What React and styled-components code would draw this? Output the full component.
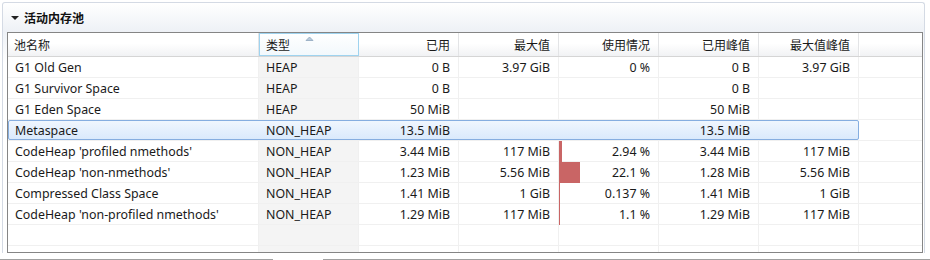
import React from "react";
import styled, { createGlobalStyle } from "styled-components";

const GlobalStyle = createGlobalStyle`
  html, body { margin: 0; padding: 0; background: #fff; }
  body {
    font-family: "Noto Sans", "Noto Sans CJK SC", sans-serif;
    font-size: 12px;
    color: #1a1a1a;
  }
`;

const columns = [
  { key: "name", title: "池名称", align: "left" },
  { key: "type", title: "类型", align: "left", sorted: true },
  { key: "used", title: "已用", align: "right" },
  { key: "max", title: "最大值", align: "right" },
  { key: "usage", title: "使用情况", align: "right" },
  { key: "peakUsed", title: "已用峰值", align: "right" },
  { key: "peakMax", title: "最大值峰值", align: "right" },
];

const pools = [
  { name: "G1 Old Gen", type: "HEAP", used: "0 B", max: "3.97 GiB", usage: "0 %", pct: 0, peakUsed: "0 B", peakMax: "3.97 GiB" },
  { name: "G1 Survivor Space", type: "HEAP", used: "0 B", max: "", usage: "", pct: 0, peakUsed: "0 B", peakMax: "" },
  { name: "G1 Eden Space", type: "HEAP", used: "50 MiB", max: "", usage: "", pct: 0, peakUsed: "50 MiB", peakMax: "" },
  { name: "Metaspace", type: "NON_HEAP", used: "13.5 MiB", max: "", usage: "", pct: 0, peakUsed: "13.5 MiB", peakMax: "", selected: true },
  { name: "CodeHeap 'profiled nmethods'", type: "NON_HEAP", used: "3.44 MiB", max: "117 MiB", usage: "2.94 %", pct: 2.94, peakUsed: "3.44 MiB", peakMax: "117 MiB" },
  { name: "CodeHeap 'non-nmethods'", type: "NON_HEAP", used: "1.23 MiB", max: "5.56 MiB", usage: "22.1 %", pct: 22.1, peakUsed: "1.28 MiB", peakMax: "5.56 MiB" },
  { name: "Compressed Class Space", type: "NON_HEAP", used: "1.41 MiB", max: "1 GiB", usage: "0.137 %", pct: 0.137, peakUsed: "1.41 MiB", peakMax: "1 GiB" },
  { name: "CodeHeap 'non-profiled nmethods'", type: "NON_HEAP", used: "1.29 MiB", max: "117 MiB", usage: "1.1 %", pct: 1.1, peakUsed: "1.29 MiB", peakMax: "117 MiB" },
  {},
  {},
];

const App = () => {
  return (
    <>
      <GlobalStyle />
      <Section>
        <SectionTitle>
          <Caret />
          活动内存池
        </SectionTitle>
        <Table>
          <HeaderRow>
            <Cols>
              {columns.map((c) => (
                <HeadCell key={c.key} $align={c.align} $sorted={c.sorted}>
                  {c.title}
                  {c.sorted && (
                    <SortArrow width="9" height="5" viewBox="0 0 9 5">
                      <path d="M1 4.5 L4.5 1 L8 4.5 Z" fill="#b9cbdc" stroke="#8ea6be" strokeWidth="0.8" />
                    </SortArrow>
                  )}
                </HeadCell>
              ))}
            </Cols>
            <HeadFiller />
          </HeaderRow>
          {pools.map((p, i) => (
            <Row key={i}>
              <Cols $selected={p.selected}>
                {columns.map((c) => (
                  <Cell key={c.key} $align={c.align} $sorted={c.sorted} $selected={p.selected}>
                    {c.key === "usage" && p.pct > 0 && (
                      <UsageBar style={{ width: `${Math.max(1, Math.round(p.pct * 0.97))}px` }} />
                    )}
                    <CellText>{p[c.key]}</CellText>
                  </Cell>
                ))}
              </Cols>
              <Filler />
            </Row>
          ))}
        </Table>
      </Section>
      <Footer>
        <FooterLine $w="273px" />
        <FooterLine $grow />
      </Footer>
    </>
  );
};

export default App;

const Section = styled.div`
  margin: 2px 5px 0 2px;
  border: 1px solid #d4dae4;
  border-bottom: none;
  border-radius: 3px 3px 0 0;
  background: linear-gradient(#ffffff 0px, #eef1f6 28px, #f4f6f9 40px, #ffffff 60px);
  padding: 0 0 0 4px;
  height: 251px;
  box-sizing: border-box;
`;

const SectionTitle = styled.div`
  display: flex;
  align-items: center;
  height: 29px;
  padding-left: 4px;
  font-weight: bold;
  font-size: 12px;
  color: #111;
  gap: 5px;
`;

const Caret = styled.span`
  width: 0;
  height: 0;
  border-left: 4px solid transparent;
  border-right: 4px solid transparent;
  border-top: 4px solid #222;
`;

const Table = styled.div`
  width: 916px;
  height: 221px;
  border: 1px solid #858585;
  box-sizing: border-box;
  background: #fff;
  overflow: hidden;
`;

const Cols = styled.div`
  display: grid;
  grid-template-columns: 251px repeat(6, 100px);
  width: 851px;
  box-sizing: border-box;
  ${(p) =>
    p.$selected &&
    `
    outline: 1px solid #86aee0;
    outline-offset: -1px;
    border-radius: 2px;
    background: linear-gradient(#f1f7fe, #d9e9fc);
  `}
`;

const HeaderRow = styled.div`
  display: flex;
  height: 23px;
  border-bottom: 1px solid #d5d5d5;
  background: linear-gradient(#ffffff 0%, #ffffff 45%, #f1f2f4 100%);
`;

const HeadCell = styled.div`
  position: relative;
  display: flex;
  align-items: center;
  justify-content: ${(p) => (p.$align === "right" ? "flex-end" : "flex-start")};
  padding: 1px ${(p) => (p.$align === "right" ? "8px" : "0")} 0 ${(p) => (p.$align === "right" ? "0" : "6px")};
  border-right: 1px solid #e3e4e6;
  box-sizing: border-box;
  height: 23px;
  color: #1a1a1a;
  ${(p) =>
    p.$sorted &&
    `
    border: 1px solid #9fd3ef;
    background: linear-gradient(#ffffff, #f2f8fc);
  `}
`;

const SortArrow = styled.svg`
  position: absolute;
  top: 2px;
  left: 45px;
`;

const HeadFiller = styled.div`
  flex: 1;
  border-left: 1px solid #fff;
`;

const Row = styled.div`
  display: flex;
  height: 21px;
  border-bottom: 1px solid #f0f0f0;
  box-sizing: border-box;
`;

const Cell = styled.div`
  position: relative;
  display: flex;
  align-items: center;
  justify-content: ${(p) => (p.$align === "right" ? "flex-end" : "flex-start")};
  padding: 1px ${(p) => (p.$align === "right" ? "8px" : "0")} 0 ${(p) => (p.$align === "right" ? "0" : "7px")};
  border-right: 1px solid ${(p) => (p.$selected ? "transparent" : "#f0f0f0")};
  background: ${(p) => (p.$sorted && !p.$selected ? "#f4f4f4" : "transparent")};
  box-sizing: border-box;
  height: 20px;
  white-space: nowrap;
  font-size: 12.4px;
  color: #1a1a1a;
`;

const CellText = styled.span`
  position: relative;
`;

const UsageBar = styled.div`
  position: absolute;
  left: 0;
  top: 0;
  bottom: -1px;
  background: #c96565;
`;

const Filler = styled.div`
  flex: 1;
`;

const Footer = styled.div`
  display: flex;
  gap: 50px;
  margin-top: 6px;
`;

const FooterLine = styled.div`
  height: 2px;
  background: #a0a0a0;
  width: ${(p) => p.$w || "auto"};
  flex: ${(p) => (p.$grow ? 1 : "none")};
`;
